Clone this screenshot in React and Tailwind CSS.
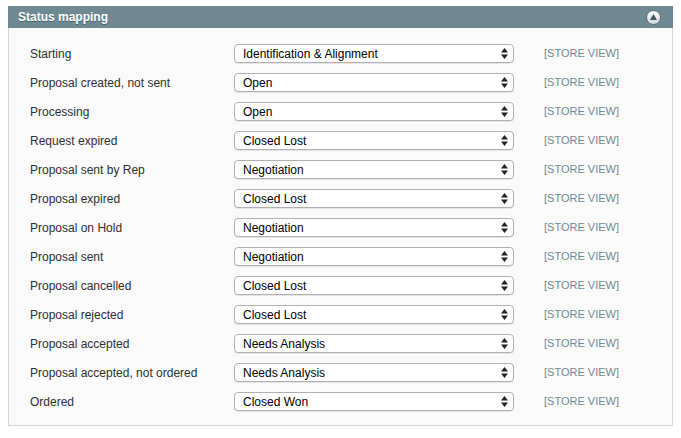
const rows = [
["Starting","Identification & Alignment"],
["Proposal created, not sent","Open"],
["Processing","Open"],
["Request expired","Closed Lost"],
["Proposal sent by Rep","Negotiation"],
["Proposal expired","Closed Lost"],
["Proposal on Hold","Negotiation"],
["Proposal sent","Negotiation"],
["Proposal cancelled","Closed Lost"],
["Proposal rejected","Closed Lost"],
["Proposal accepted","Needs Analysis"],
["Proposal accepted, not ordered","Needs Analysis"],
["Ordered","Closed Won"],
];
export default function App(){
  return (
    <div className="w-[681px] h-[438px] bg-white pt-[6px] pl-[8px]" style={{fontFamily:'"Helvetica","Liberation Sans",Arial,sans-serif'}}>
      <div className="w-[665px]">
        <div className="h-[22px] bg-[#6f8992] flex items-center justify-between pl-[10px] pr-[12px]">
          <span className="text-white font-bold text-[12px] [text-shadow:0_1px_0_#4a5f66]">Status mapping</span>
          <div className="w-[15px] h-[15px] rounded-full bg-gradient-to-b from-white to-[#cfd8dc] border border-[#5a7079] flex items-center justify-center">
            <svg width="7" height="6" viewBox="0 0 7 6"><path d="M3.5 0L7 6H0z" fill="#3c5560"/></svg>
          </div>
        </div>
        <div className="h-[398px] bg-[#fafafa] border border-t-0 border-[#d6d6d6] pt-[11px]">
          {rows.map(([l,v])=>(
            <div key={l} className="h-[29px] flex items-center">
              <div className="w-[225px] pl-[21px] text-[12px] text-[#2f2f2f]">{l}</div>
              <div className="w-[280px] h-[19px] bg-white border border-[#b0b0b0] rounded-[4px] flex items-center justify-between pl-[8px] pr-[5px] text-[12px] text-black shadow-[0_1px_0_#e6e6e6]">
                <span>{v}</span>
                <svg width="7" height="11" viewBox="0 0 7 11"><path d="M3.5 0L7 4.5H0z M3.5 11L0 6.5H7z" fill="#222"/></svg>
              </div>
              <div className="ml-[30px] text-[11px] text-[#6f8992]">[STORE VIEW]</div>
            </div>
          ))}
        </div>
      </div>
    </div>
  );
}
